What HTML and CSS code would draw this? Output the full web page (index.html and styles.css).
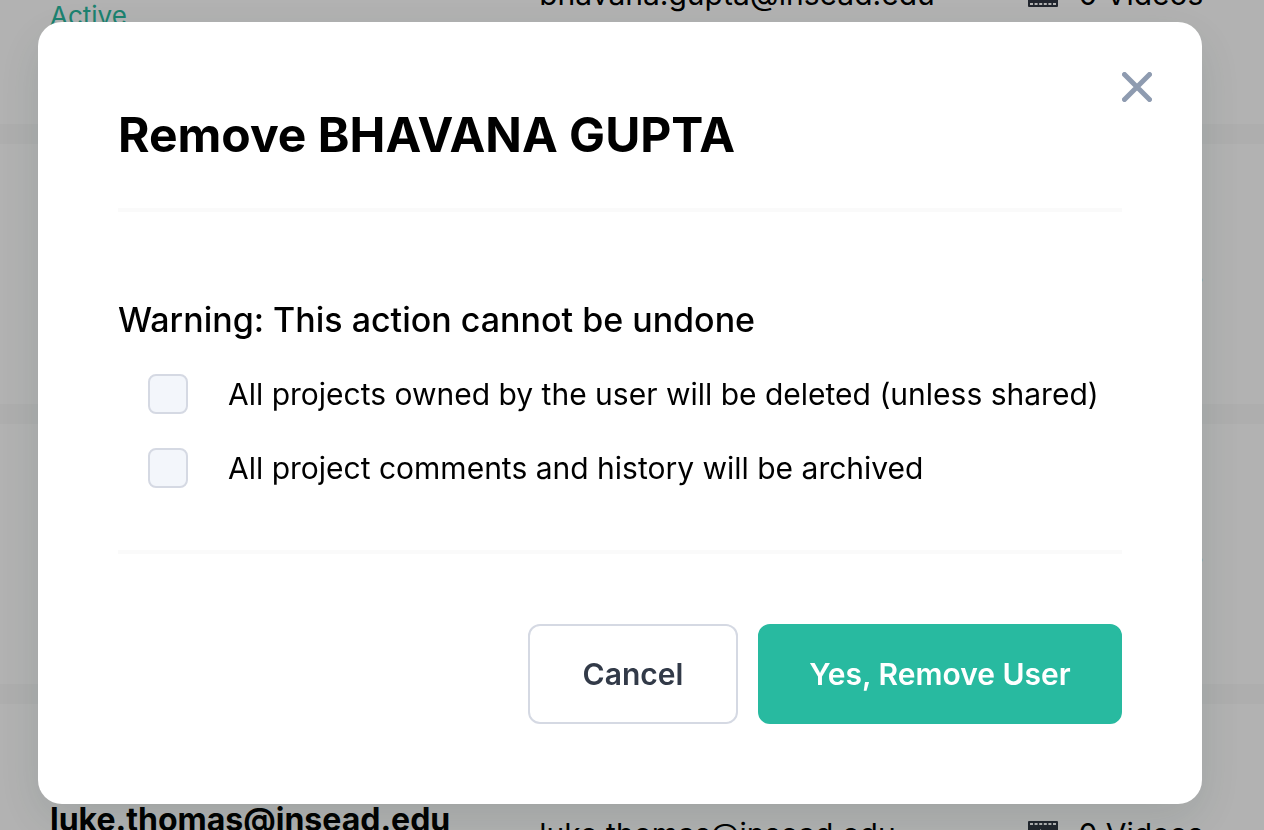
FILE: index.html
```html
<!DOCTYPE html>
<html lang="en">
<head>
  <meta charset="UTF-8">
  <meta name="viewport" content="width=device-width, initial-scale=1.0">
  <title>Remove User</title>
  <link rel="stylesheet" href="styles.css">
</head>
<body>
  <svg class="sprite" aria-hidden="true">
    <symbol id="film" viewBox="0 0 30 26">
      <rect width="30" height="26" rx="1" fill="#303642"/>
      <path d="M2 3h26M2 23h26" stroke="#fff" stroke-width="2" stroke-dasharray="3 1.6"/>
      <path d="M12 8l7 5-7 5z" fill="#fff"/>
    </symbol>
  </svg>

  <main class="users">
    <div class="user-row">
      <div class="user">
        <div class="user-name">BHAVANA GUPTA</div>
        <div class="user-status">Active</div>
      </div>
      <div class="user-email">bhavana.gupta@insead.edu</div>
      <div class="user-videos"><svg class="film"><use href="#film"/></svg>0 Videos</div>
    </div>
    <div class="user-row">
      <div class="user"></div>
      <div class="user-email"></div>
      <div class="user-videos"><svg class="film"><use href="#film"/></svg>0 Videos</div>
    </div>
    <div class="user-row">
      <div class="user"></div>
      <div class="user-email"></div>
      <div class="user-videos"><svg class="film"><use href="#film"/></svg>0 Videos</div>
    </div>
    <div class="user-row">
      <div class="user">
        <div class="user-name">luke.thomas@insead.edu</div>
        <div class="user-status">Active</div>
      </div>
      <div class="user-email">luke.thomas@insead.edu</div>
      <div class="user-videos"><svg class="film"><use href="#film"/></svg>0 Videos</div>
    </div>
  </main>

  <div class="overlay">
    <div class="modal" role="dialog" aria-modal="true" aria-labelledby="modal-title">
      <button type="button" class="close" aria-label="Close">
        <svg width="30" height="30" viewBox="0 0 30 30" fill="none" stroke="#8e9bb0" stroke-width="5" stroke-linecap="round">
          <path d="M2.5 2.5l25 25M27.5 2.5l-25 25"/>
        </svg>
      </button>
      <h1 class="modal-title" id="modal-title">Remove BHAVANA GUPTA</h1>

      <form class="modal-form">
        <h2 class="warning">Warning: This action cannot be undone</h2>
        <label class="option" for="projects">
          <input type="checkbox" class="checkbox" id="projects">
          All projects owned by the user will be deleted (unless shared)
        </label>
        <label class="option" for="comments">
          <input type="checkbox" class="checkbox" id="comments">
          All project comments and history will be archived
        </label>
        <div class="actions">
          <button type="button" class="btn btn-cancel">Cancel</button>
          <button type="button" class="btn btn-remove">Yes, Remove User</button>
        </div>
      </form>
    </div>
  </div>
</body>
</html>
```
FILE: styles.css
```css
* {
  box-sizing: border-box;
}

body {
  margin: 0;
  font-family: Inter, sans-serif;
  font-size: 30px;
  color: #000;
  background: #f9fafa;
}

.sprite {
  display: none;
}

/* User list behind the modal */
.users {
  display: flex;
  flex-direction: column;
  justify-content: center;
  gap: 20px;
  height: 100vh;
  padding-bottom: 2px;
  overflow: hidden;
}

.user-row {
  flex: none;
  display: grid;
  grid-template-columns: 49fr 49fr 23fr;
  align-items: center;
  height: 260px;
  padding: 0 6px 0 50px;
  background: #fff;
  white-space: nowrap;
}

.user {
  padding-top: 8px;
  line-height: 36px;
}

.user-name {
  font-size: 32px;
  font-weight: 700;
}

.user-status {
  font-size: 26px;
  color: #28baa0;
}

.user-videos {
  display: flex;
  align-items: center;
  gap: 20px;
}

.film {
  width: 30px;
  height: 26px;
}

/* Modal */
.overlay {
  position: fixed;
  inset: 0;
  padding: 22px 62px 26px 38px;
  background: rgba(0, 0, 0, 0.3);
}

.modal {
  position: relative;
  padding: 80px;
  background: #fff;
  border-radius: 24px;
  box-shadow: 0 16px 48px rgba(20, 50, 40, 0.12);
}

.close {
  position: absolute;
  top: 50px;
  right: 50px;
  padding: 0;
  border: none;
  background: none;
  line-height: 0;
  cursor: pointer;
}

.modal-title {
  margin: 0;
  padding-bottom: 40px;
  border-bottom: 4px solid #fafafa;
  font-size: 48px;
  font-weight: 700;
  line-height: 66px;
}

.modal-form {
  padding-top: 84px;
}

.warning {
  margin: 0 0 30px;
  font-size: 34px;
  font-weight: 500;
  line-height: 48px;
}

.option {
  display: flex;
  align-items: center;
  gap: 40px;
  margin: 0 0 34px 30px;
  line-height: 40px;
  white-space: nowrap;
}

.checkbox {
  appearance: none;
  flex: none;
  width: 40px;
  height: 40px;
  margin: 0;
  border: 2px solid #d5d9e3;
  border-radius: 8px;
  background: #f3f6fb;
}

.checkbox:checked {
  background: #28baa0;
}

.actions {
  display: flex;
  justify-content: flex-end;
  gap: 20px;
  margin-top: 62px;
  padding-top: 70px;
  border-top: 4px solid #fafafa;
}

.btn {
  height: 100px;
  padding: 0 48px;
  border: 2px solid #d5d9e3;
  border-radius: 12px;
  font-family: inherit;
  font-size: 30px;
  font-weight: 600;
  cursor: pointer;
}

.btn-cancel {
  min-width: 210px;
  color: #323a48;
  background: #fff;
}

.btn-remove {
  min-width: 364px;
  color: #fff;
  background: #28baa0;
  border-color: #28baa0;
}
```
